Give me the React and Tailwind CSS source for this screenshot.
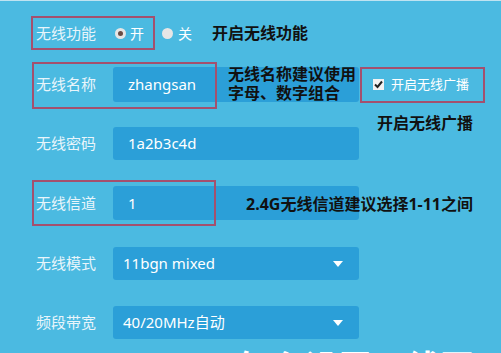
import React from 'react';

const font = { fontFamily: '"Noto Sans", "Noto Sans CJK SC", sans-serif' };

const Radio = ({ checked }) => (
  <span className="flex h-[11px] w-[11px] items-center justify-center rounded-full bg-[#e6e6e6]">
    {checked && <span className="h-[5px] w-[5px] rounded-full bg-[#6a4c44]" />}
  </span>
);

const Arrow = () => (
  <svg width="10" height="7" viewBox="0 0 10 7" className="absolute right-[16px] top-[14px]">
    <path d="M0 0 L10 0 L5 6 Z" fill="#ffffff" />
  </svg>
);

const Field = ({ value, select }) => (
  <div className={`relative flex h-full w-[246px] items-center rounded-[3px] bg-[#2b9fd8] text-[15px] text-white ${select ? 'pl-[10px]' : 'pl-[15px]'}`}>
    {value}
    {select && <Arrow />}
  </div>
);

const Label = ({ children }) => (
  <div className="w-[113px] shrink-0 pl-[36px] text-[15px] text-[#e8f5fb]">{children}</div>
);

export default function App() {
  return (
    <div
      className="relative h-[353px] w-[501px] overflow-hidden border-t border-[#bfe3f1] bg-[#4bbae1]"
      style={font}
    >
      {/* row 1 */}
      <div className="mt-[15px] flex h-[34px] items-center">
        <Label>无线功能</Label>
        <div className="ml-[2px] flex items-center gap-[4px] text-[14px] text-white">
          <Radio checked />
          <span>开</span>
        </div>
        <div className="ml-[18px] flex items-center gap-[5px] text-[14px] text-white">
          <Radio />
          <span>关</span>
        </div>
        <span className="ml-[20px] text-[16px] font-bold text-[#111]">开启无线功能</span>
      </div>

      {/* row 2 */}
      <div className="mt-[17px] flex h-[35px] items-center">
        <Label>无线名称</Label>
        <Field value="zhangsan" />
        <div className="ml-[14px] flex items-center gap-[7px] text-[13px] text-white">
          <span className="flex h-[11px] w-[11px] items-center justify-center bg-[#f2f2f2]">
            <svg width="9" height="9" viewBox="0 0 9 9">
              <path d="M1 4.5 L3.5 7 L8 1.5" stroke="#222" strokeWidth="2" fill="none" />
            </svg>
          </span>
          <span>开启无线广播</span>
        </div>
      </div>

      {/* row 3 */}
      <div className="mt-[25px] flex h-[33px] items-center">
        <Label>无线密码</Label>
        <Field value="1a2b3c4d" />
      </div>

      {/* row 4 */}
      <div className="mt-[26px] flex h-[34px] items-center">
        <Label>无线信道</Label>
        <Field value="1" />
      </div>

      {/* row 5 */}
      <div className="mt-[27px] flex h-[33px] items-center">
        <Label>无线模式</Label>
        <Field value="11bgn mixed" select />
      </div>

      {/* row 6 */}
      <div className="mt-[26px] flex h-[33px] items-center">
        <Label>频段带宽</Label>
        <Field value="40/20MHz自动" select />
      </div>

      <div className="ml-[236px] mt-[11px] whitespace-nowrap text-[34px] font-bold leading-none text-white">
        怎么设置无线网
      </div>

      {/* annotations */}
      <div className="absolute left-[31px] top-[15px] h-[34px] w-[124px] border-2 border-[#a4506e]" />
      <div className="absolute left-[32px] top-[61px] h-[47px] w-[185px] border-2 border-[#a4506e]" />
      <div className="absolute left-[360px] top-[66px] h-[36px] w-[125px] border-2 border-[#a4506e]" />
      <div className="absolute left-[32px] top-[179px] h-[46px] w-[184px] border-2 border-[#a4506e]" />

      <div className="absolute left-[228px] top-[64px] text-[16px] font-bold leading-[19px] text-[#111]">
        <div>无线名称建议使用</div>
        <div>字母、数字组合</div>
      </div>
      <div className="absolute left-[377px] top-[110px] text-[16px] font-bold text-[#111]">开启无线广播</div>
      <div className="absolute left-[246px] top-[191px] text-[16px] font-bold text-[#111]">
        2.4G无线信道建议选择1-11之间
      </div>
    </div>
  );
}
